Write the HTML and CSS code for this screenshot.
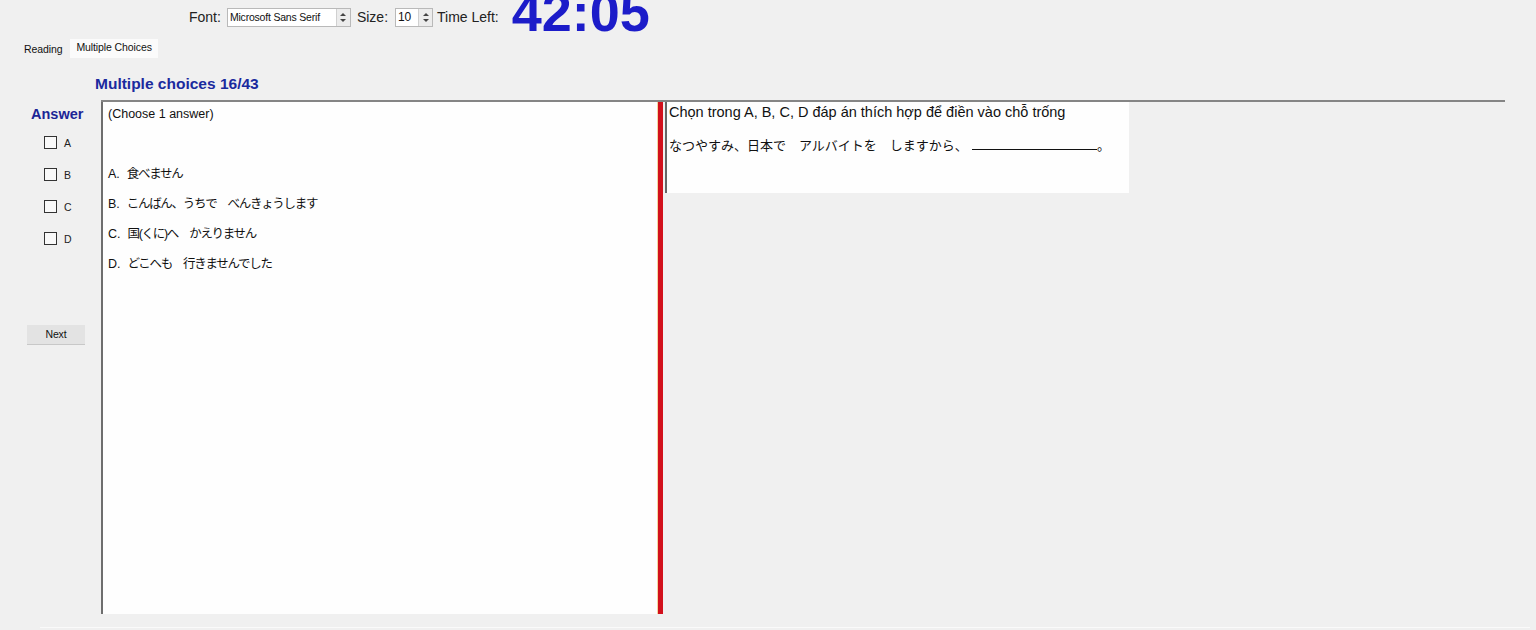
FILE: index.html
```html
<!DOCTYPE html>
<html lang="vi">
<head>
<meta charset="utf-8">
<title>Multiple choices</title>
<link rel="stylesheet" href="styles.css">
</head>
<body>
<div class="toolbar">
  <span class="lbl lbl-font">Font:</span>
  <div class="combo combo-font">
    <span class="combo-text">Microsoft Sans Serif</span>
    <div class="spin"><span class="up"></span><span class="down"></span></div>
  </div>
  <span class="lbl lbl-size">Size:</span>
  <div class="combo combo-size">
    <span class="combo-text">10</span>
    <div class="spin"><span class="up"></span><span class="down"></span></div>
  </div>
  <span class="lbl lbl-time">Time Left:</span>
  <span class="timer">42:05</span>
</div>

<div class="tabs">
  <span class="tab">Reading</span>
  <span class="tab active">Multiple Choices</span>
</div>

<div class="title">Multiple choices 16/43</div>

<div class="main">
  <aside class="answer">
    <div class="answer-title">Answer</div>
    <div class="opts">
      <label class="opt"><span class="box"></span>A</label>
      <label class="opt"><span class="box"></span>B</label>
      <label class="opt"><span class="box"></span>C</label>
      <label class="opt"><span class="box"></span>D</label>
    </div>
    <div class="next">Next</div>
  </aside>

  <div class="work">
    <div class="question">
      <div class="hint">(Choose 1 answer)</div>
      <div class="choices">
        <div class="choice">A.&nbsp; <span class="jp">食べません</span></div>
        <div class="choice">B.&nbsp; <span class="jp">こんばん、うちで　べんきょうします</span></div>
        <div class="choice">C.&nbsp; <span class="jp">国(くに)へ　かえりません</span></div>
        <div class="choice">D.&nbsp; <span class="jp">どこへも　行きませんでした</span></div>
      </div>
    </div>
    <div class="divider"></div>
    <div class="right">
      <div class="prompt">
        <div class="prompt-line">Chọn trong A, B, C, D đáp án thích hợp để điền vào chỗ trống</div>
        <div class="prompt-jp">なつやすみ、日本で　アルバイトを　しますから、<span class="blank"></span>。</div>
      </div>
    </div>
  </div>
</div>
<div class="bottom-line"></div>
</body>
</html>
```

FILE: styles.css
```css
html, body {
  margin: 0;
  padding: 0;
}
body {
  background: #f0f0f0;
  font-family: "Liberation Sans", Arial, "Noto Sans CJK JP", sans-serif;
  color: #111;
  width: 1536px;
  height: 630px;
  overflow: hidden;
  position: relative;
}

/* toolbar */
.toolbar {
  height: 38px;
  display: flex;
  align-items: flex-start;
  padding-left: 189px;
  box-sizing: border-box;
}
.lbl {
  font-size: 14px;
  line-height: 19px;
  margin-top: 8px;
  color: #222;
}
.lbl-font { margin-right: 6px; }
.lbl-size { margin-left: 6px; margin-right: 7px; }
.lbl-time { margin-left: 4px; }
.combo {
  margin-top: 8px;
  height: 19px;
  box-sizing: border-box;
  border: 1px solid #b9b9b9;
  background: #fff;
  display: flex;
  align-items: stretch;
}
.combo-font { width: 124px; }
.combo-size { width: 38px; }
.combo-text {
  flex: 1;
  font-size: 10.5px;
  line-height: 17px;
  padding-left: 2px;
  letter-spacing: -0.2px;
  color: #111;
  white-space: nowrap;
  overflow: hidden;
}
.combo-size .combo-text { font-size: 12px; padding-left: 2px; }
.spin {
  width: 13px;
  border-left: 1px solid #d0d0d0;
  background: #ececec;
  display: flex;
  flex-direction: column;
  justify-content: center;
  align-items: center;
  gap: 3px;
}
.spin .up, .spin .down {
  width: 0;
  height: 0;
  border-left: 3px solid transparent;
  border-right: 3px solid transparent;
}
.spin .up { border-bottom: 3px solid #444; }
.spin .down { border-top: 3px solid #444; }
.timer {
  margin-left: 13px;
  margin-top: -15px;
  font-size: 54px;
  line-height: 54px;
  color: #1c1cc9;
  font-weight: bold;
}

/* tabs */
.tabs {
  height: 20px;
  display: flex;
  align-items: center;
  padding-left: 24px;
}
.tab {
  font-size: 10.5px;
  letter-spacing: -0.1px;
  color: #111;
  line-height: 20px;
  margin-top: 2px;
}
.tab.active {
  background: #fbfbfb;
  margin-left: 8px;
  margin-top: 0;
  padding: 0 6px;
  height: 19px;
  line-height: 17px;
}

/* title */
.title {
  margin-top: 18px;
  margin-left: 95px;
  font-size: 15.5px;
  font-weight: bold;
  color: #1a2a9e;
  line-height: 16px;
  height: 24px;
}

/* main */
.main {
  display: flex;
  align-items: flex-start;
}
.answer {
  width: 101px;
  height: 514px;
}
.answer-title {
  margin-top: 7px;
  margin-left: 31px;
  font-size: 14.5px;
  font-weight: bold;
  color: #1c2596;
  line-height: 15px;
}
.opts {
  margin-top: 14px;
  margin-left: 44px;
  display: flex;
  flex-direction: column;
  gap: 19px;
}
.opt {
  display: flex;
  align-items: center;
  gap: 7px;
  font-size: 10.5px;
  color: #222;
  height: 13px;
}
.box {
  width: 13px;
  height: 13px;
  box-sizing: border-box;
  border: 1px solid #333;
  background: #f9f9f9;
}
.next {
  margin-top: 80px;
  margin-left: 27px;
  width: 58px;
  height: 20px;
  box-sizing: border-box;
  background: #e3e3e3;
  border-bottom: 1px solid #c8c8c8;
  font-size: 10.5px;
  letter-spacing: -0.2px;
  text-align: center;
  line-height: 19px;
  color: #111;
}

.work {
  width: 1404px;
  height: 514px;
  border-top: 2px solid #858585;
  display: flex;
  align-items: flex-start;
  box-sizing: border-box;
}
.question {
  width: 556px;
  height: 512px;
  background: #fefefe;
  border-left: 2px solid #6e6e6e;
  box-sizing: border-box;
  padding: 4px 0 0 5px;
  font-size: 12.5px;
  color: #111;
}
.hint {
  line-height: 16px;
}
.choices {
  margin-top: 44px;
  display: flex;
  flex-direction: column;
  gap: 14px;
}
.choice {
  line-height: 16px;
  white-space: nowrap;
}
.jp {
  font-size: 12.5px;
  letter-spacing: -1.3px;
}
.divider {
  width: 6px;
  height: 512px;
  background: #d2101c;
  border-left: 1px solid #f3d7a0;
  box-sizing: border-box;
}
.right {
  padding-left: 2px;
}
.prompt {
  width: 464px;
  height: 91px;
  background: #fefefe;
  border-left: 2px solid #666;
  box-sizing: border-box;
  padding: 2px 0 0 2px;
  color: #111;
}
.prompt-line {
  font-size: 14.5px;
  line-height: 16px;
  white-space: nowrap;
}
.prompt-jp {
  margin-top: 17px;
  font-size: 13px;
  line-height: 16px;
  white-space: nowrap;
}
.blank {
  display: inline-block;
  width: 125px;
  margin-left: 4px;
  border-bottom: 1px solid #111;
  height: 12px;
}
.bottom-line {
  position: absolute;
  left: 40px;
  right: 6px;
  top: 627px;
  height: 1px;
  background: #fafafa;
}
```
